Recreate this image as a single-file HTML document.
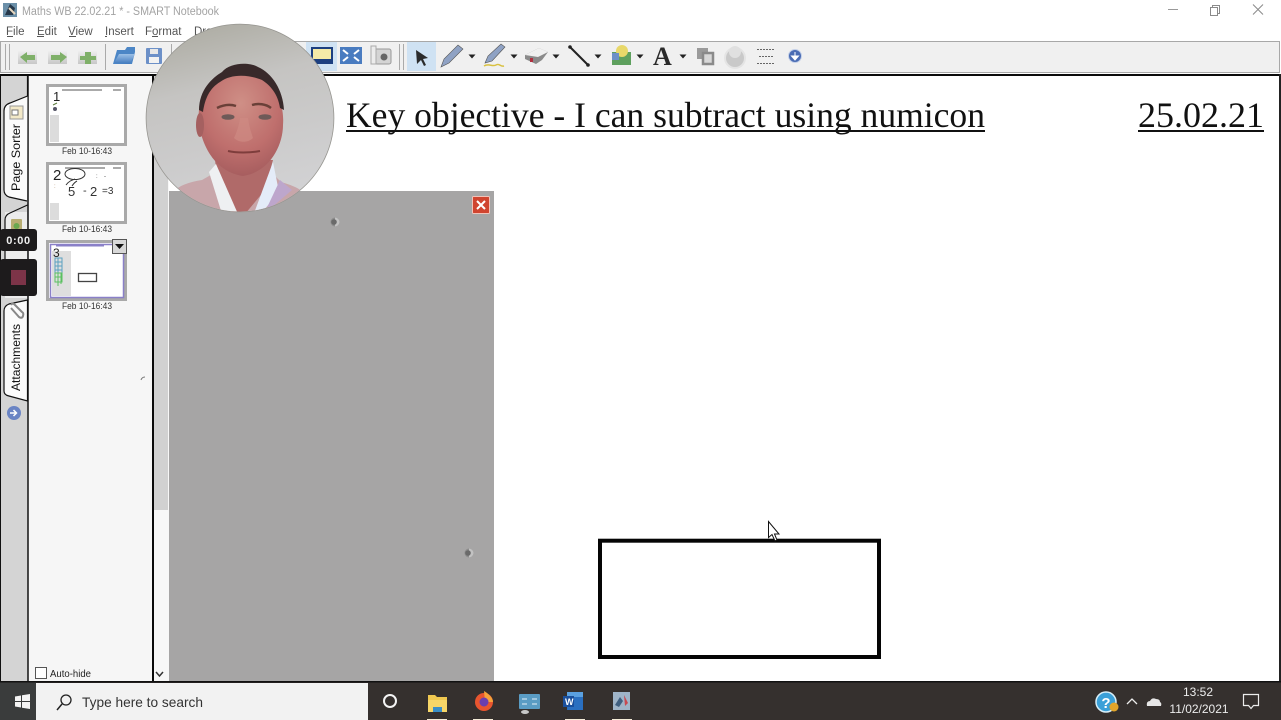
<!DOCTYPE html>
<html><head><meta charset="utf-8"><title>Maths WB 22.02.21 * - SMART Notebook</title>
<style>
html,body{margin:0;padding:0;background:#fff;width:1281px;height:720px;overflow:hidden}
svg{display:block;position:absolute;left:0;top:0;filter:blur(.35px)}
text{font-family:"Liberation Sans",sans-serif}
.s{font-family:"Liberation Serif",serif}
</style></head><body>
<svg width="1281" height="720" viewBox="0 0 1281 720" xmlns="http://www.w3.org/2000/svg">
<defs>
<linearGradient id="bg" x1="0" y1="0" x2="0.25" y2="1"><stop offset="0" stop-color="#a7a69b"/><stop offset=".4" stop-color="#c5c4c2"/><stop offset="1" stop-color="#d2d2d4"/></linearGradient>
<radialGradient id="fc" cx="0.5" cy="0.3" r="0.75"><stop offset="0" stop-color="#cf8f86"/><stop offset=".6" stop-color="#bf6f6d"/><stop offset="1" stop-color="#a25a5c"/></radialGradient>
<linearGradient id="btn" x1="0" y1="0" x2="0" y2="1"><stop offset="0" stop-color="#f2f2f2"/><stop offset="1" stop-color="#c8c8c8"/></linearGradient>
<linearGradient id="fold" x1="0" y1="0" x2="0" y2="1"><stop offset="0" stop-color="#9cc0e6"/><stop offset="1" stop-color="#3f78bd"/></linearGradient>
<clipPath id="cc"><circle cx="240" cy="118" r="93.5"/></clipPath>
</defs>
<rect width="1281" height="720" fill="#fff"/>
<!-- title bar -->
<rect x="3" y="3" width="14" height="14" fill="#6b8fa8"/><path d="M5 15L10 4l5 4-2 7z" fill="#26384a"/><path d="M9 8l6 6" stroke="#e8d8c0" stroke-width="2"/>
<text x="22" y="15" font-size="11.500" fill="#a3a3a3" textLength="197" lengthAdjust="spacingAndGlyphs">Maths WB 22.02.21 * - SMART Notebook</text>
<path d="M1168 9.500h10" stroke="#999"/>
<path d="M1210.500 7.500h7v8h-7zM1212.500 7.500v-2h7v8h-2" fill="none" stroke="#8a8a8a"/>
<path d="M1253 4.500l10 10M1263 4.500l-10 10" stroke="#8a8a8a"/>
<!-- menu -->
<g font-size="11.500" fill="#555">
<text x="6" y="35">File</text><text x="37" y="35">Edit</text><text x="68" y="35">View</text><text x="105" y="35">Insert</text><text x="145" y="35">Format</text><text x="194" y="35">Draw</text>
</g>
<g stroke="#555"><path d="M7 36.500h6M37 36.500h7M69 36.500h7M105 36.500h2M152 36.500h6"/></g>
<!-- toolbar -->
<rect x="0.500" y="41.500" width="1279" height="31" fill="#f0f0f0" stroke="#a8a8a8"/>
<path d="M5.500 44v26M9.500 44v26M105.500 44v26M171.500 44v26M399.500 44v26M403.500 44v26" stroke="#aaa"/>
<!-- nav icons -->
<rect x="18" y="50" width="19" height="14" fill="url(#btn)"/><path d="M20 57l7-5v3h8v5h-8v3z" fill="#7fb069"/>
<rect x="48" y="50" width="19" height="14" fill="url(#btn)"/><path d="M67 57l-7-5v3h-9v5h9v3z" fill="#7fb069"/>
<rect x="78" y="50" width="19" height="14" fill="url(#btn)"/><path d="M85 52h6v4h5v4h-5v4h-6v-4h-5v-4h5z" fill="#7fb069"/>
<path d="M113 64l4-14h8l2-3h8v5l-3 12z" fill="#4c86c6"/><path d="M114 63l5-9h16l-5 10z" fill="url(#fold)"/>
<rect x="146" y="48" width="16" height="16" rx="1" fill="#6c90c8"/><rect x="150" y="49" width="8" height="5" fill="#e8e8e8"/><rect x="149" y="57" width="10" height="6" fill="#f2f2f2"/>
<rect x="306" y="42" width="31" height="29" fill="#cfe2f3"/><rect x="311" y="47" width="22" height="17" fill="#1c3f80"/><rect x="313" y="49" width="18" height="10" fill="#f4eaa8"/>
<rect x="340" y="47" width="22" height="17" fill="#4a7cc0"/><path d="M343 50l5 4M359 50l-5 4M343 61l5-4M359 61l-5-4" stroke="#fff" stroke-width="2"/>
<rect x="371" y="49" width="20" height="15" rx="2" fill="#d4d4d4" stroke="#999"/><circle cx="384" cy="57" r="3.500" fill="#666"/><rect x="371" y="46" width="5" height="18" fill="#ececec" stroke="#aaa"/>
<!-- tools -->
<rect x="407" y="42" width="29" height="29" fill="#cfe2f3"/>
<path d="M416 50l12 8-5 1 3 6-2 1-3-6-4 4z" fill="#2b2b2b"/>
<path d="M441 67l3-8 14-14 5 4-14 14z" fill="#8fa2c4" stroke="#555" stroke-width=".6"/>
<path d="M468.500 54.500h7l-3.500 4zM510.500 54.500h7l-3.500 4zM552.500 54.500h7l-3.500 4zM594.500 54.500h7l-3.500 4zM636.500 54.500h7l-3.500 4zM679.500 54.500h7l-3.500 4z" fill="#222"/>
<path d="M485 63l3-7 13-12 4 3-13 14z" fill="#8fa2c4" stroke="#555" stroke-width=".6"/><path d="M484 66c5-3 8 1 12-1s4 2 8 1" fill="none" stroke="#d8c040" stroke-width="1.500"/>
<path d="M525 55l14-7 9 4-6 8-6 4-11-5z" fill="#8a8a8a"/><path d="M525 55l14-7 9 4-10 5z" fill="#f0f0f0"/><rect x="530" y="58" width="3" height="4" fill="#b03040"/>
<path d="M570 47l18 18" stroke="#222" stroke-width="2"/><circle cx="570" cy="47" r="1.800" fill="#222"/><circle cx="588" cy="65" r="1.800" fill="#222"/>
<rect x="612" y="52" width="19" height="13" fill="#5ea05e"/><circle cx="622" cy="51" r="6" fill="#e8d86a"/><path d="M612 53h7v7h-7z" fill="#6c90c8"/>
<text class="s" x="653" y="65" font-size="26" font-weight="bold" fill="#2a2a2a">A</text>
<rect x="697" y="48" width="11" height="11" fill="#9a9a9a"/><rect x="703" y="53" width="10" height="11" fill="#d8d8d8" stroke="#8a8a8a" stroke-width="2.500"/>
<circle cx="735" cy="58" r="10" fill="#c9c9c9" stroke="#e4e4e4" stroke-width="2"/><circle cx="735" cy="52" r="6" fill="#e0e0e0"/>
<path d="M757 49.500h17M757 63.500h17M759 56.500h14" stroke="#666" stroke-dasharray="2 1"/>
<circle cx="795" cy="56" r="6.500" fill="#4a6cb4" stroke="#c4d0e8"/><path d="M795 52v4M791.500 56h7L795 60z" fill="#fff" stroke="#fff"/>
<!-- canvas frame -->
<rect x="0" y="74" width="1281" height="2" fill="#0a0a0a"/>
<rect x="1279" y="74" width="2" height="608" fill="#222"/>
<!-- sidebar -->
<rect x="0" y="76" width="152" height="606" fill="#f6f6f6"/>
<rect x="0" y="76" width="28" height="606" fill="#d4d4d4"/>
<rect x="0" y="74" width="1" height="608" fill="#111"/>
<path d="M28 76V682" stroke="#111" stroke-width="1.500"/>
<path d="M27.500 76V96L10 103q-6 2-6 8V190q0 5 5 7l18 4" fill="#fbfbfb" stroke="#111" stroke-width="1.200"/>
<rect x="10" y="106" width="13" height="13" fill="#f3e9c8" stroke="#999"/><rect x="12" y="110" width="6" height="5" fill="#fff" stroke="#777"/>
<text transform="translate(20,191) rotate(-90)" font-size="12" fill="#111" textLength="67" lengthAdjust="spacingAndGlyphs">Page Sorter</text>
<rect x="5" y="212" width="22" height="86" fill="#ececec"/>
<path d="M27.500 205L10 213q-5 2-5 7V296" fill="none" stroke="#111" stroke-width="1.200"/>
<rect x="11" y="219" width="11" height="12" rx="1" fill="#b7ad72"/><circle cx="16.500" cy="226" r="3" fill="#6aa84f"/>
<path d="M27.500 300L9 304q-5 2-5 7V391q0 4 5 5l18.500 5z" fill="#fbfbfb" stroke="#111" stroke-width="1.200"/>
<path d="M11 308l8 9q3 2 4-1t-1-4l-8-8q-2-1-3 1" fill="none" stroke="#888" stroke-width="2"/>
<text transform="translate(20,391) rotate(-90)" font-size="12" fill="#111" textLength="67" lengthAdjust="spacingAndGlyphs">Attachments</text>
<circle cx="14" cy="413" r="7" fill="#6a84c4"/><path d="M10 413h6M13.500 410l3 3-3 3" fill="none" stroke="#fff" stroke-width="1.500"/>
<!-- recording widget -->
<rect x="0" y="229" width="37" height="22" rx="3" fill="#1d1b1c"/>
<text x="18.500" y="244" font-size="11" font-weight="bold" fill="#f0f0f0" text-anchor="middle" letter-spacing=".6">0:00</text>
<rect x="0" y="259" width="37" height="37" rx="3" fill="#1d1b1c"/>
<rect x="11" y="270" width="15" height="15" fill="#7d3448"/>
<!-- thumbnails -->
<g fill="#fff" stroke="#a9a9a9" stroke-width="3">
<rect x="47.500" y="85.500" width="78" height="59"/>
<rect x="47.500" y="163.500" width="78" height="59"/>
<rect x="47.500" y="241.500" width="78" height="58"/>
</g>
<g font-size="9" fill="#333">
<text x="62" y="154" textLength="50" lengthAdjust="spacingAndGlyphs">Feb 10-16:43</text><text x="62" y="232" textLength="50" lengthAdjust="spacingAndGlyphs">Feb 10-16:43</text><text x="62" y="309" textLength="50" lengthAdjust="spacingAndGlyphs">Feb 10-16:43</text>
</g>
<!-- thumb 1 -->
<text x="53" y="101" font-size="13" fill="#222">1</text>
<path d="M62 90h40M113 90h8" stroke="#777" stroke-width="1.300"/>
<rect x="50" y="115" width="9" height="27" fill="#dcdcdc"/>
<circle cx="55" cy="109" r="2" fill="#556"/><path d="M53 105l4-2" stroke="#5a7a3a"/>
<!-- thumb 2 -->
<text x="53" y="180" font-size="15" fill="#222">2</text>
<path d="M65 168h40M113 168h8" stroke="#777" stroke-width="1.300"/>
<ellipse cx="75" cy="174" rx="10" ry="5.500" fill="none" stroke="#333"/>
<path d="M66 185c3-4 6-5 9-6M72 186c2-3 3-4 5-5" stroke="#333" fill="none"/>
<text x="68" y="196" font-size="13" fill="#333">5</text><text x="83" y="194" font-size="11" fill="#333">-</text><text x="90" y="196" font-size="13" fill="#333">2</text><text x="102" y="194" font-size="10" fill="#333">=3</text>
<rect x="50" y="203" width="9" height="17" fill="#dcdcdc"/>
<text x="96" y="178" font-size="6" fill="#444">:</text><text x="104" y="178" font-size="6" fill="#444">-</text><text x="54" y="188" font-size="6" fill="#a86">:</text>
<!-- thumb 3 -->
<rect x="50.500" y="244.500" width="73" height="53" fill="#fff" stroke="#8a80c8" stroke-width="1.500"/>
<path d="M56 245.500h48" stroke="#8a80c8" stroke-width="2"/>
<rect x="52" y="251" width="19" height="45" fill="#dedede"/>
<text x="53" y="257" font-size="12" fill="#222">3</text>
<g stroke="#5aa0c0" fill="none"><path d="M55 258h7v15h-7zM58 258v15M55 262h7M55 266h7M55 270h7"/></g>
<g stroke="#5ac060" fill="none"><path d="M55 273h7v9h-7zM58 273v13M55 277h7M61 273v11"/></g>
<rect x="78.500" y="273.500" width="18" height="8" fill="#fff" stroke="#444" stroke-width="1.300"/>
<rect x="112.500" y="239.500" width="14" height="14" fill="#d8d8d8" stroke="#555"/><path d="M115 244h9l-4.500 5z" fill="#111"/>
<!-- autohide -->
<rect x="35.500" y="667.500" width="11" height="11" fill="#fff" stroke="#555"/>
<text x="50" y="677" font-size="10.500" fill="#222" textLength="41" lengthAdjust="spacingAndGlyphs">Auto-hide</text>
<path d="M141 380q1-3 4-3" fill="none" stroke="#777"/>
<!-- page scroll & divider -->
<rect x="152" y="74" width="2" height="608" fill="#0a0a0a"/>
<rect x="154" y="76" width="15" height="606" fill="#f7f7f7"/>
<rect x="154" y="76" width="14" height="434" fill="#d1d1d1"/>
<path d="M156 672l3.500 4 3.500-4" fill="none" stroke="#333" stroke-width="1.500"/>
<!-- canvas content -->
<text class="s" x="346" y="127" font-size="36" fill="#111" textLength="639" lengthAdjust="spacingAndGlyphs">Key objective - I can subtract using numicon</text>
<rect x="346" y="130" width="639" height="2" fill="#111"/>
<text class="s" x="1138" y="127" font-size="36" fill="#111" textLength="126" lengthAdjust="spacingAndGlyphs">25.02.21</text>
<rect x="1138" y="130" width="126" height="2" fill="#111"/>
<!-- gray panel -->
<rect x="169" y="191" width="325" height="491" fill="#a6a5a5"/>
<rect x="472.500" y="196.500" width="17" height="17" rx="1" fill="#d0442f" stroke="#f1c2b8"/>
<path d="M477 201l8 8M485 201l-8 8" stroke="#fff" stroke-width="2"/>
<circle cx="335" cy="222" r="4.500" fill="#8c8c8c"/><path d="M335 217.500a4.500 4.500 0 0 1 0 9z" fill="#c2c2c2"/><circle cx="334" cy="222" r="2.800" fill="#6a6a6a"/>
<circle cx="469" cy="553" r="4.500" fill="#8c8c8c"/><path d="M469 548.500a4.500 4.500 0 0 1 0 9z" fill="#c2c2c2"/><circle cx="468" cy="553" r="2.800" fill="#6a6a6a"/>
<!-- rectangle -->
<rect x="600" y="540.700" width="279" height="116.300" fill="#fff" stroke="#050505" stroke-width="4"/>
<!-- cursor -->
<path d="M768.500 521.500v16l3.500-3 3 6.500 2-1-2.500-6h4.500z" fill="#fff" stroke="#111" stroke-width="1"/>
<!-- webcam -->
<circle cx="240" cy="118" r="94.300" fill="#969590"/>
<g clip-path="url(#cc)">
<rect x="140" y="20" width="200" height="200" fill="url(#bg)"/>
<!-- pink shirt shoulders -->
<path d="M170 195c8-10 20-13 32-15l14-8h55l10 10c10 3 20 6 27 15v20H170z" fill="#c8a6aa"/>
<!-- neck -->
<path d="M215 160h58l-8 30-20 24h-12l-14-22z" fill="#b06a69"/>
<!-- collars -->
<path d="M209 172l7-8 22 50h-16z" fill="#eef0f2"/>
<path d="M273 162l6 30-20 24h-6z" fill="#e4ecf8"/>
<path d="M280 180l12 10-28 24z" fill="#bda6cc"/>
<!-- head -->
<path d="M199 125C197 100 204 76 238 72C272 72 285 100 283 125C283 145 270 172 243 176C216 172 203 148 199 125Z" fill="url(#fc)"/>
<ellipse cx="200" cy="125" rx="4" ry="12" fill="#a56060"/>
<!-- hair -->
<path d="M199 110C199 90 212 78 222 72C230 62 250 62 258 67C272 73 283 90 284 110L280 108C278 94 270 85 262 80C250 75 232 73 220 82C210 88 205 98 203 112Z" fill="#38292a"/>
<!-- brows, eyes, nose, mouth -->
<path d="M217 108c6-3 13-4 19-2M252 105c6-2 14-1 19 3" stroke="#6a4038" stroke-width="2.500" fill="none"/>
<ellipse cx="228" cy="117" rx="6.500" ry="2.800" fill="#6e5a58"/><ellipse cx="265" cy="117" rx="6.500" ry="2.800" fill="#6e5a58"/>
<path d="M240 118c-1 8-4 16-6 20 5 5 14 5 19 0-2-6-4-12-5-20" fill="#cf8a83" opacity=".7"/>
<path d="M228 151c8 2 22 2 32 0" stroke="#7e3d3c" stroke-width="2" fill="none"/>
</g>
<!-- taskbar -->
<rect x="0" y="682" width="1281" height="38" fill="#35302e"/>
<rect x="0" y="682" width="36" height="38" fill="#3a3c3c"/>
<rect x="0" y="681" width="1281" height="1.500" fill="#111"/>
<path d="M15 696.500l6-1v5.500h-6zM22 695.300l8-1.300v7h-8zM15 702h6v5.500l-6-1zM22 702h8v7l-8-1.300z" fill="#f4f4f4"/>
<rect x="36" y="683" width="332" height="37" fill="#f2f2f2"/>
<circle cx="66" cy="700" r="5" fill="none" stroke="#222" stroke-width="1.300"/><path d="M62 704l-5 6" stroke="#222" stroke-width="1.500"/>
<text x="82" y="707" font-size="14" fill="#333" textLength="121" lengthAdjust="spacingAndGlyphs">Type here to search</text>
<circle cx="390" cy="701" r="6" fill="none" stroke="#f4f4f4" stroke-width="2"/>
<path d="M428 695h7l2 2h10v15h-19z" fill="#f0c850"/><rect x="428" y="700" width="19" height="12" fill="#f7d668"/><rect x="433" y="707" width="9" height="5" fill="#3a8fc8"/>
<rect x="427" y="719" width="20" height="1" fill="#f5ecd8"/><rect x="473" y="719" width="20" height="1" fill="#f5ecd8"/><rect x="565" y="719" width="20" height="1" fill="#f5ecd8"/><rect x="612" y="719" width="20" height="1" fill="#f5ecd8"/>
<circle cx="484" cy="702" r="9" fill="#e8552f"/><path d="M484 691c5 3 9 7 9 11h-8z" fill="#f6a23a"/><circle cx="484" cy="702" r="4.500" fill="#6a3fb0"/>
<rect x="519" y="694" width="21" height="15" rx="1" fill="#5a9cc4"/><path d="M522 699h5M532 699h5M522 704h5M532 704h5" stroke="#e8f2f8"/><ellipse cx="525" cy="712" rx="4" ry="2" fill="#c8c8c8"/>
<rect x="567" y="692" width="16" height="18" fill="#2a6fc0"/><rect x="567" y="692" width="16" height="5" fill="#5aa0e0"/><rect x="563" y="696" width="11" height="11" fill="#1a4f9c"/>
<text x="565" y="705" font-size="9" font-weight="bold" fill="#fff">W</text>
<rect x="613" y="692" width="17" height="18" fill="#9fb4c8"/><path d="M615 705l5-8 3 4-4 6z" fill="#3f5f80"/><path d="M624 695l4 8-3 3z" fill="#c84850"/>
<circle cx="1106" cy="702" r="10" fill="#3ba0d8" stroke="#d7eef8" stroke-width="1.500"/>
<text x="1106" y="708" font-size="15" font-weight="bold" fill="#fff" text-anchor="middle">?</text>
<circle cx="1114" cy="707" r="4.500" fill="#e2a52a"/>
<path d="M1127 704l5-5 5 5" fill="none" stroke="#ededed" stroke-width="1.300"/>
<path d="M1147 706q-1-5 3-5 2-4 6-2 4 0 4 3 2 1 1 4z" fill="#e6e6e6"/>
<text x="1198" y="696" font-size="12" fill="#ececec" text-anchor="middle">13:52</text>
<text x="1199" y="713" font-size="12" fill="#ececec" text-anchor="middle">11/02/2021</text>
<path d="M1243.500 694.500h15v11h-5l-2.500 3-2.500-3h-5z" fill="none" stroke="#ececec" stroke-width="1.200"/>
</svg>
</body></html>
